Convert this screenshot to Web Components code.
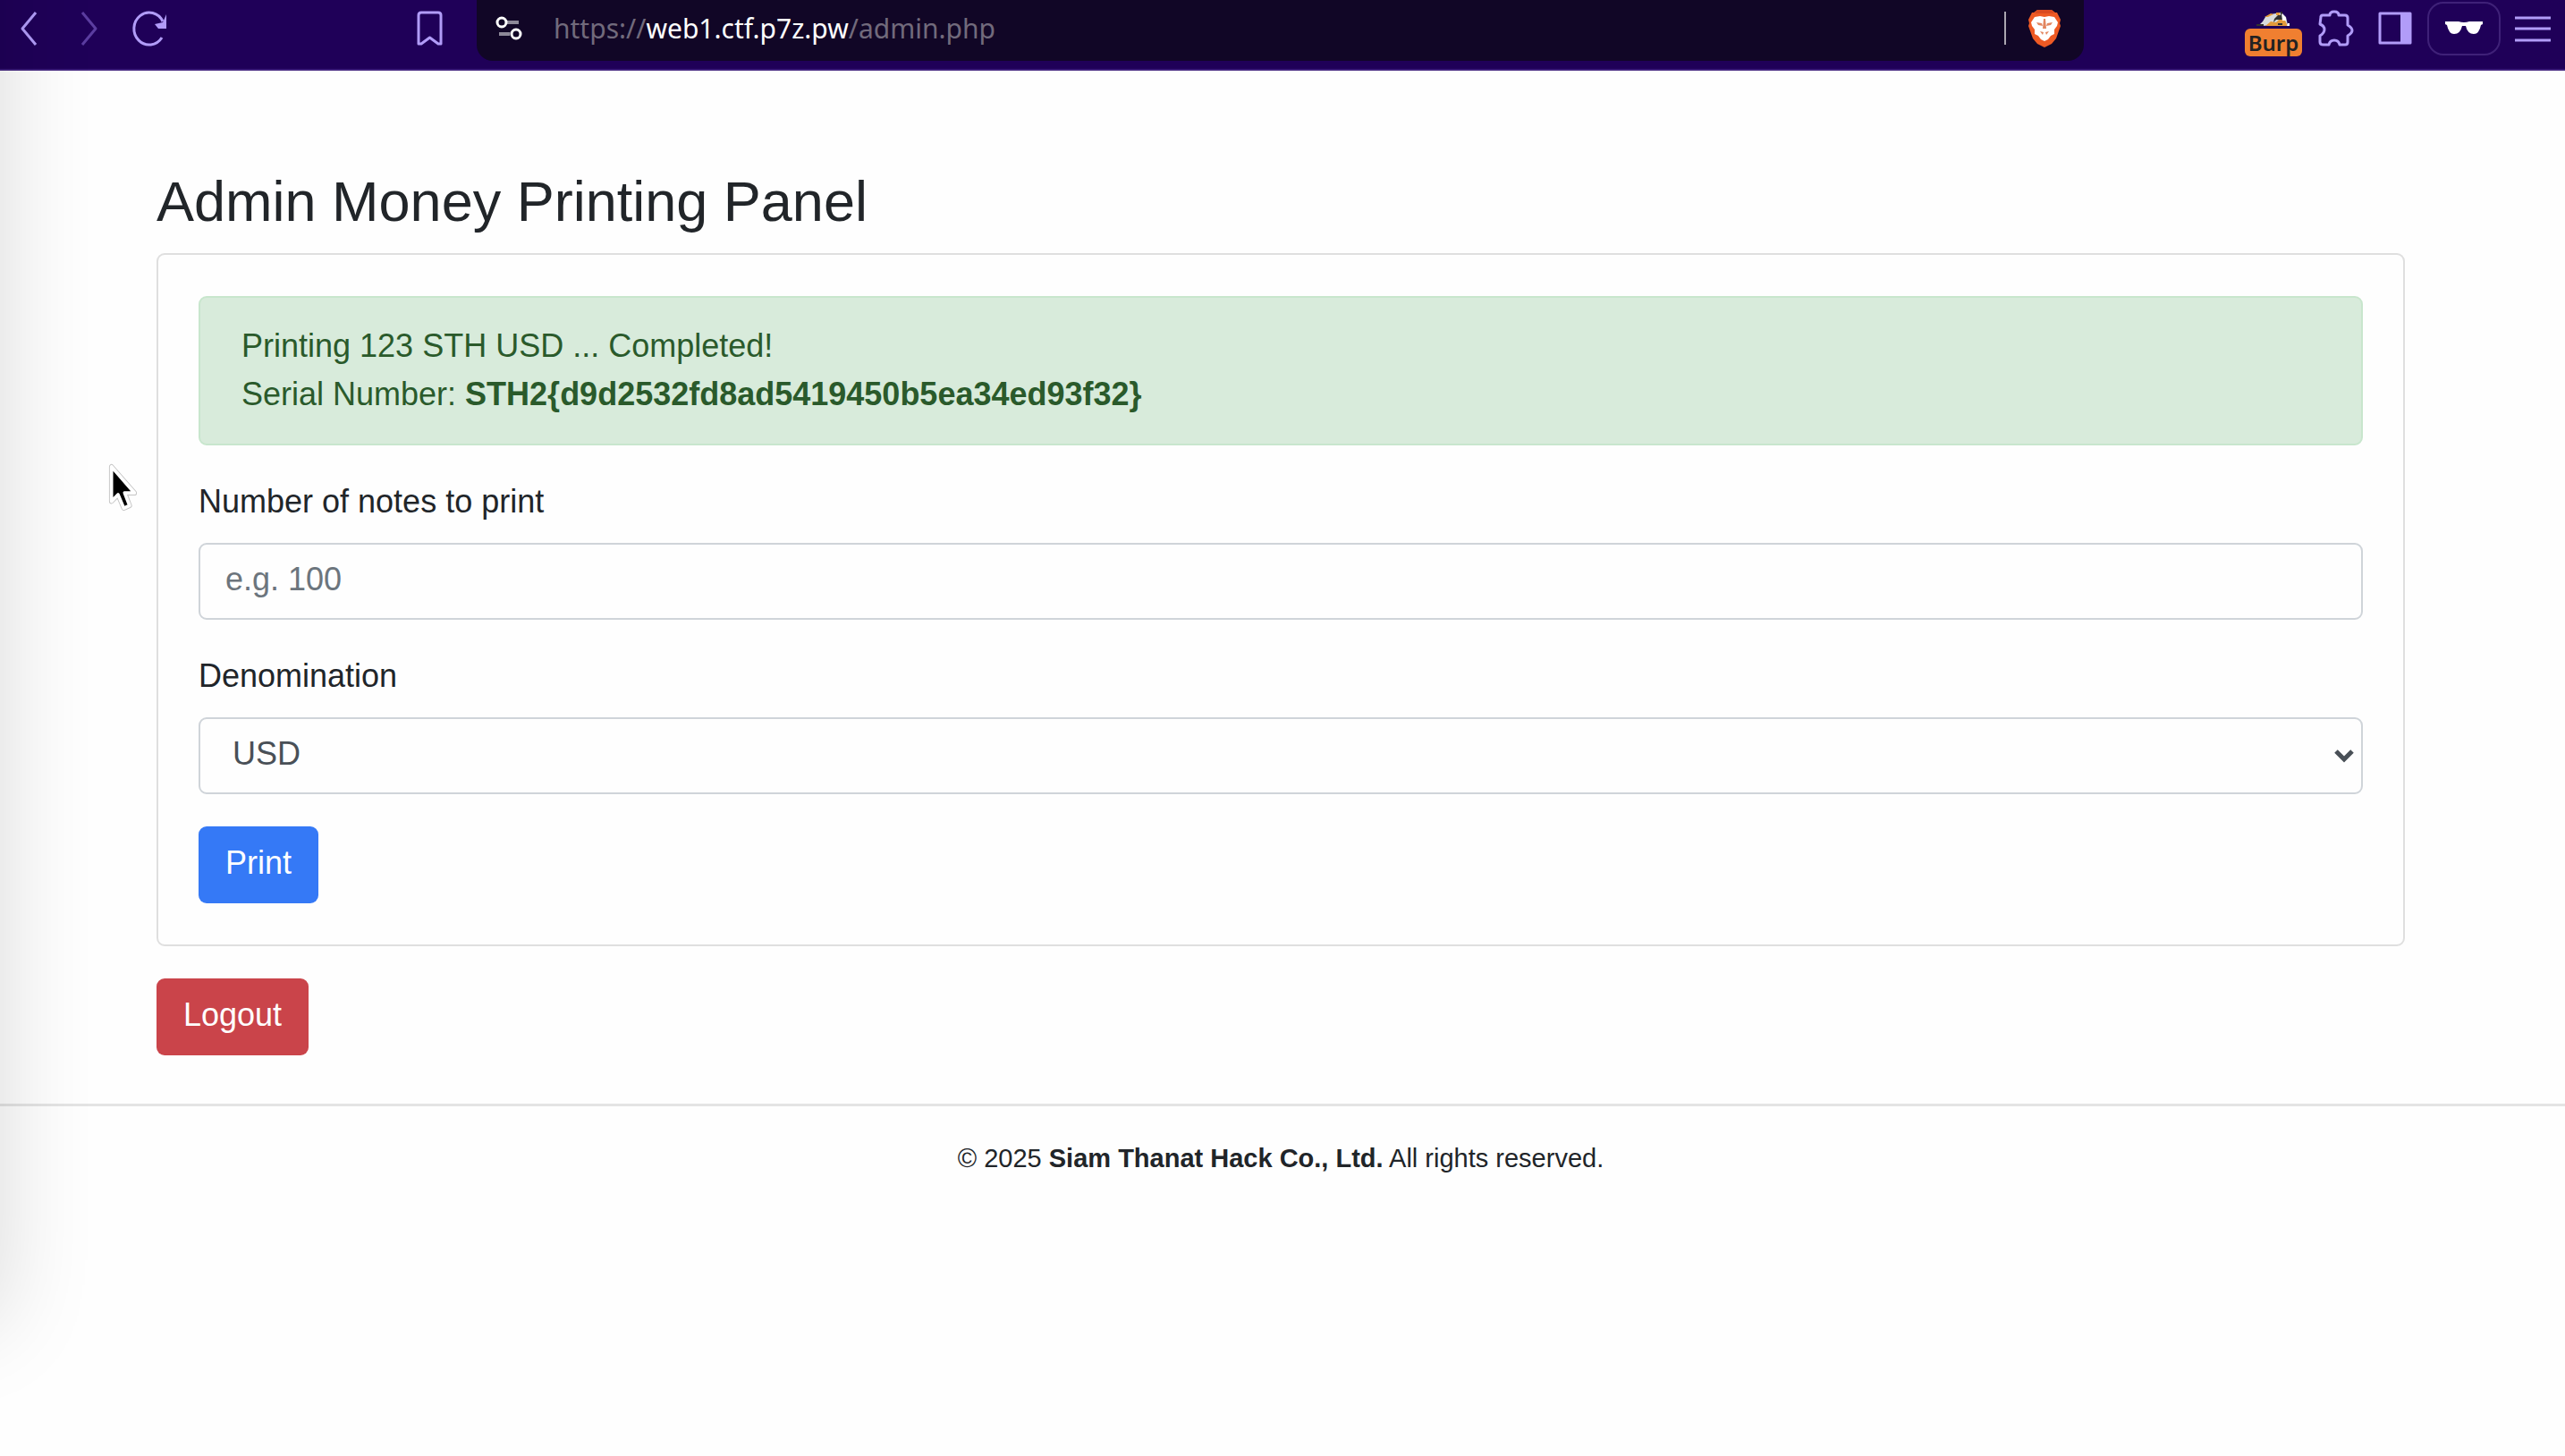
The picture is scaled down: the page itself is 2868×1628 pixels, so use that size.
<!DOCTYPE html>
<html lang="en">
<head>
<meta charset="utf-8">
<title>Admin Money Printing Panel</title>
<style>
  html { background: #fefefe; }
  body {
    margin: 0;
    min-height: 100vh;
    overflow-x: hidden;
    font: 36px/54px "Liberation Sans", Arial, sans-serif;
    color: #212529;
  }
</style>
</head>
<body>
<app-window></app-window>

<script>
const define = (name, html, setup) => {
  const template = document.createElement('template');
  template.innerHTML = html;
  customElements.define(name, class extends HTMLElement {
    constructor() {
      super();
      this.attachShadow({ mode: 'open' }).append(template.content.cloneNode(true));
    }
    connectedCallback() { if (setup) setup(this, this.shadowRoot); }
  });
};

/* Toolbar icons, each drawn on a 64 x 64 board */
const icons = {
  back: '<path d="M40 14 25 32 40 50" stroke-width="3"/>',
  forward: '<path d="M24 14 39 32 24 50" stroke-width="3"/>',
  reload: '<path d="M45 42A17 18 0 1 1 46 24" stroke-width="3"/><path d="M50 16v16H41l-4-5 9-2z" fill="currentColor" stroke="none"/>',
  bookmark: '<path d="M20 17q0-3 3-3h19q3 0 3 3v32l-3 0-9.500-7-9.500 7h-3z" stroke-width="3"/>',
  tune: '<g stroke="#8d8898" stroke-width="4"><path d="M30 25h13M21 38h12"/></g><g stroke="#fff" stroke-width="3"><circle cx="24" cy="25" r="5"/><circle cx="40" cy="38" r="5"/></g>',
  brave: '<path d="M20 14 24 11h16l4 3h2l4 8-1 4 1 3-5 14-5 6-8 4-8-4-5-6-5-14 1-3-1-4 4-8z" fill="#ee5a24" stroke="none"/><path d="M24 11h16l3 4H21z" fill="#d94a20" stroke="none"/><path d="m27 18 5 1 5-1 6 1 4 6-1 4-3 4v5l-4 2-3 4-4 2-4-2-3-4-4-2v-5l-3-4-1-4 4-6z" fill="#fff" stroke="none"/><path d="m23 25 6 1 1 3-5-1zM41 25l-6 1-1 3 5-1zM31 21h2l1 11h-4zM27 35l4 1-1 3zM37 35l-4 1 1 3z" fill="#e2855f" stroke="none"/>',
  puzzle: '<path d="M17 19q0-2 2-2h8q0-4 5-4t5 4h7q3 0 3 3v8q5 3 5 6t-5 6v7q0 3-3 3h-6q-1-5-6-5t-6 5h-6q-4 0-4-3v-7q5-3 5-7t-5-6z" stroke-width="3"/>',
  panel: '<path d="M15 15h34v33H15z" stroke-width="3"/><path d="M38 15h11v33H38z" fill="currentColor" stroke="none"/>',
  private: '<path d="M11 24h15q6 2 12 0h15v3l-2 1q-2 10-8 10-7 0-9-9h-4q-2 9-9 9-6 0-8-10l-2-1z" fill="#fff" stroke="none"/>',
  menu: '<path d="M12 20h40M12 32h40M12 45h40" stroke-width="3"/>'
};

define('tool-button', `
<style>
  :host { display: block; flex: none; color: #b19cf8; }
  :host([muted]) { color: #5b3da0; }
  button {
    display: flex; align-items: center; justify-content: center;
    width: 64px; height: 64px; margin: 0; padding: 0;
    border: 0; background: none; color: inherit;
  }
  svg { flex: none; width: 64px; height: 64px; fill: none; stroke: currentColor; stroke-linejoin: round; }
  :host([framed]) button {
    box-sizing: border-box; width: 82px; height: 60px; margin-top: 2px;
    border: 2px solid #3f2178; border-radius: 18px;
  }
</style>
<button type="button"></button>`, (host, root) => {
  const button = root.querySelector('button');
  button.setAttribute('aria-label', host.getAttribute('label'));
  button.innerHTML = '<svg viewBox="0 0 64 64" aria-hidden="true">' + icons[host.getAttribute('icon')] + '</svg>';
});

define('burp-button', `
<style>
  :host { display: block; flex: none; }
  button {
    display: flex; flex-direction: column; align-items: center;
    width: 64px; height: 64px; margin: 0; padding: 13px 0 0; border: 0; background: none;
  }
  svg { flex: none; width: 38px; height: 16px; margin-bottom: 3px; }
  span {
    width: 64px; height: 31px; border-radius: 6px; background: #f07f30; color: #222;
    font: 600 24px/31px "Noto Sans", sans-serif; text-align: center;
  }
</style>
<button type="button">
  <svg viewBox="0 0 38 16" aria-hidden="true">
    <path d="M2 16 7 11 10 6 16 3 28 1 33 6 35 15z" fill="#d9dcdc"/>
    <path d="M10 16 16 11 22 12 26 8 32 10 35 16z" fill="#e39a3b"/>
    <path d="M9 6 16 2 19 3 13 6zM22 1h4v3h-4z" fill="#e39a3b"/>
    <path d="M24 4h3V0h2v9h-7l-3 3 1-4zM0 14h8v2H0zM24 13h5v2h-5z" fill="#33322f"/>
    <path d="M28 2 33 7v3h-4zM35 13h2v3h-3z" fill="#fff"/>
  </svg>
  <span>Burp</span>
</button>`);

define('address-bar', `
<style>
  :host {
    display: flex; flex: 1; min-width: 0; height: 68px; box-sizing: border-box;
    padding: 0 12px 0 4px; align-items: flex-start;
    background: #110626; border-radius: 0 0 18px 18px;
    font: 30px/64px "Noto Sans", sans-serif;
  }
  .url { flex: 1; min-width: 0; margin-left: 18px; overflow: hidden; white-space: nowrap; color: #716a7c; }
  strong { font-weight: 400; color: #fff; }
  i { width: 2px; height: 37px; margin: 13px 11px 0 0; background: #aaa5b0; }
</style>
<tool-button icon="tune" label="View site information"></tool-button>
<div class="url" role="textbox" aria-label="Address">https://<strong>web1.ctf.p7z.pw</strong>/admin.php</div>
<i></i>
<tool-button icon="brave" label="Brave Shields"></tool-button>`);

define('browser-toolbar', `
<style>
  :host {
    display: flex; align-items: flex-start; height: 77px;
    background: #1f0058; border-bottom: 2px solid #3b1d79;
  }
  nav, .actions { display: flex; align-items: flex-start; gap: 4px; box-sizing: border-box; flex: none; }
  nav { width: 533px; padding-right: 21px; }
  .mark { margin-left: auto; }
  .actions { width: 538px; padding-right: 4px; justify-content: flex-end; }
</style>
<nav aria-label="Browser">
  <tool-button icon="back" label="Back"></tool-button>
  <tool-button icon="forward" label="Forward" muted></tool-button>
  <tool-button icon="reload" label="Reload"></tool-button>
  <tool-button class="mark" icon="bookmark" label="Bookmark"></tool-button>
</nav>
<address-bar></address-bar>
<div class="actions">
  <burp-button></burp-button>
  <tool-button icon="puzzle" label="Extensions"></tool-button>
  <tool-button icon="panel" label="Sidebar"></tool-button>
  <tool-button icon="private" label="Private window" framed></tool-button>
  <tool-button icon="menu" label="Menu"></tool-button>
</div>`);

define('alert-box', `
<style>
  :host {
    display: block; padding: 27px 46px 28px; margin-bottom: 36px;
    border: 2px solid #c8e6cd; border-radius: 9px;
    background: #d8ebdb; color: #2a5a2b;
  }
</style>
<slot></slot>`);

define('panel-card', `
<style>
  :host { display: block; padding: 46px 45px; margin-bottom: 36px; border: 2px solid #dfdfdf; border-radius: 9px; }
</style>
<slot></slot>`);

define('action-button', `
<style>
  :host { display: block; }
  button {
    display: block; margin: 0; padding: 14px 30px 18px; border: 0; border-radius: 9px;
    background: #3579f6; color: #fff; font: inherit;
  }
  :host([danger]) button { background: #ca444a; }
</style>
<button type="button"><slot></slot></button>`);

define('print-form', `
<style>
  :host { display: block; }
  form { display: block; margin: 0; }
  .field { display: grid; margin-bottom: 36px; }
  label { margin-bottom: 19px; }
  input, select {
    box-sizing: border-box; width: 100%; height: 86px; margin: 0; padding: 12px 28px 16px;
    border: 2px solid #cfd4d9; border-radius: 9px; background: #fefefe;
    color: #495057; font: inherit; appearance: none; outline: 0;
  }
  select { grid-area: 2 / 1; padding: 12px 36px 16px; }
  input::placeholder { color: #6c757d; opacity: 1; }
  svg { grid-area: 2 / 1; place-self: center end; width: 24px; height: 16px; margin-right: 9px; pointer-events: none; }
</style>
<form>
  <div class="field">
    <label for="count">Number of notes to print</label>
    <input id="count" type="text" placeholder="e.g. 100">
  </div>
  <div class="field">
    <label for="unit">Denomination</label>
    <select id="unit"><option>USD</option></select>
    <svg viewBox="0 0 24 16" aria-hidden="true"><path d="M3 3 12 12 21 3" fill="none" stroke="#495057" stroke-width="5"/></svg>
  </div>
  <action-button>Print</action-button>
</form>`);

define('page-footer', `
<style>
  :host {
    display: block; padding: 36px 4px 36px 0; border-top: 3px solid #e4e4e4;
    font-size: 29px; line-height: 44px; text-align: center;
  }
</style>
<slot></slot>`);

define('mouse-pointer', `
<style>
  :host { position: absolute; left: 121px; top: 518px; width: 33px; height: 53px; pointer-events: none; }
  svg { display: block; width: 33px; height: 53px; overflow: visible; }
</style>
<svg viewBox="0 0 36 56" preserveAspectRatio="none" aria-hidden="true">
  <path d="M4 4V45L12 37 19 53 26 50 20 35H32z" fill="#000" stroke="#c4c4c4" stroke-width="6" stroke-linejoin="round"/>
  <path d="M4 4V45L12 37 19 53 26 50 20 35H32z" fill="#000" stroke="#fff" stroke-width="4" stroke-linejoin="round"/>
</svg>`);

define('app-window', `
<style>
  :host { display: block; }
  main { max-width: 2514px; margin: 0 auto; padding: 108px 24px 54px; }
  .page { padding-right: 4px; }
  h1 { margin: 0 0 20px; font-size: 63px; line-height: 76px; font-weight: 400; }
  /* shade thrown by a neighbouring window on the left */
  .shade {
    position: fixed; right: 100%; top: -200px; bottom: 150px; width: 300px;
    box-shadow: 0 0 104px rgba(0, 0, 0, .15); pointer-events: none;
  }
</style>
<browser-toolbar></browser-toolbar>
<div class="page">
  <main>
    <h1>Admin Money Printing Panel</h1>
    <panel-card>
      <alert-box>Printing 123 STH USD ... Completed!<br>Serial Number: <strong>STH2{d9d2532fd8ad5419450b5ea34ed93f32}</strong></alert-box>
      <print-form></print-form>
    </panel-card>
    <action-button danger>Logout</action-button>
  </main>
</div>
<page-footer>© 2025 <strong>Siam Thanat Hack Co., Ltd.</strong> All rights reserved.</page-footer>
<div class="shade"></div>
<mouse-pointer></mouse-pointer>`);
</script>
</body>
</html>
